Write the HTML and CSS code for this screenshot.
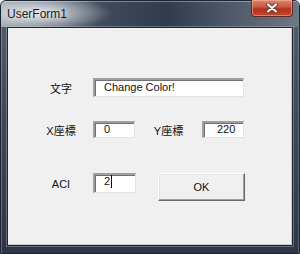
FILE: index.html
```html
<!DOCTYPE html>
<html lang="ja">
<head>
    <meta charset="UTF-8">
    <title>UserForm1</title>
    <link rel="stylesheet" href="styles.css">
</head>
<body>
    <div class="window">
        <div class="titlebar">
            <span class="title">UserForm1</span>
            <div class="close-btn">
                <svg width="14" height="10" viewBox="0 0 14 10">
                    <path d="M3 1.5 L11 8.5 M11 1.5 L3 8.5" stroke="#5a3a36" stroke-width="4" stroke-linecap="round"/>
                    <path d="M3 1.5 L11 8.5 M11 1.5 L3 8.5" stroke="#ffffff" stroke-width="2.2" stroke-linecap="round"/>
                </svg>
            </div>
        </div>
        <div class="client">
            <div class="row row-text">
                <span class="label">文字</span>
                <div class="textbox box-long">Change Color!</div>
            </div>
            <div class="row row-pos">
                <span class="label">X座標</span>
                <div class="textbox box-short">0</div>
                <span class="label-mid">Y座標</span>
                <div class="textbox box-short box-y">220</div>
            </div>
            <div class="row row-aci">
                <span class="label label-aci">ACI</span>
                <div class="textbox box-aci">2<span class="caret"></span></div>
                <div class="button">OK</div>
            </div>
        </div>
    </div>
</body>
</html>
```

FILE: styles.css
```css
* {
    margin: 0;
    padding: 0;
    box-sizing: border-box;
}
body {
    width: 300px;
    height: 254px;
    background-color: #f0f0f0;
    font-family: "Liberation Sans", "Noto Sans CJK JP", sans-serif;
    font-size: 11px;
    color: #000000;
    overflow: hidden;
}
.window {
    width: 300px;
    height: 254px;
    border: 1px solid #1c2430;
    border-radius: 6px 6px 0 0;
    background: linear-gradient(180deg, #56606e 0px, #3e4858 120px, #2c3646 254px);
    box-shadow: inset 1px 0 0 rgba(255, 255, 255, 0.25), inset -1px 0 0 rgba(255, 255, 255, 0.2);
    display: flex;
    flex-direction: column;
}
.titlebar {
    height: 26px;
    display: flex;
    align-items: flex-start;
    padding-left: 6px;
    padding-right: 6px;
    border-radius: 5px 5px 0 0;
    background:
        radial-gradient(ellipse 75px 18px at 36px 12px, rgba(238, 240, 244, 0.9), rgba(238, 240, 244, 0) 100%),
        linear-gradient(90deg, #9aa1ab 0px, #7a8390 40px, #404b5b 100px, #303b4b 165px, #4c5767 225px, #6f7885 300px);
    box-shadow: inset 0 1px 0 rgba(255, 255, 255, 0.35);
}
.title {
    font-size: 12px;
    color: #1a1a1a;
    margin-top: 6px;
    text-shadow: 0 0 6px rgba(255, 255, 255, 0.9);
}
.close-btn {
    margin-left: auto;
    width: 42px;
    height: 17px;
    margin-top: -1px;
    border: 1px solid #5e2a24;
    border-top: none;
    border-radius: 0 0 4px 4px;
    background: linear-gradient(180deg, #d98873 0%, #c9553c 45%, #b2321c 55%, #c4442c 100%);
    box-shadow: inset 0 0 0 1px rgba(255, 190, 170, 0.5);
    display: flex;
    align-items: center;
    justify-content: center;
}
.close-btn svg {
    display: block;
}
.client {
    margin: 0 6px 7px 6px;
    flex-grow: 1;
    background-color: #f0f0f0;
    border: 1px solid #1e2733;
    box-shadow: 0 0 0 1px rgba(200, 206, 214, 0.35), inset -1px -1px 0 #c8ccd0;
    padding-top: 50px;
}
.row {
    display: flex;
    align-items: center;
}
.label {
    width: 56px;
    margin-left: 25px;
    margin-right: 4px;
    text-align: center;
    color: #111111;
}
.textbox {
    background-color: #ffffff;
    border-top: 2px solid #a0a0a0;
    border-left: 2px solid #a0a0a0;
    border-right: 1px solid #e3e3e3;
    border-bottom: 1px solid #e3e3e3;
    box-shadow: inset 1px 1px 0 #6f6f6f;
    padding-left: 9px;
    line-height: 13px;
    padding-top: 0;
    color: #111111;
}
.box-long {
    width: 151px;
    height: 19px;
    padding-top: 1px;
}
.row-pos {
    margin-top: 23px;
}
.row-pos .label {
    margin-top: 2px;
}
.box-short {
    width: 42px;
    height: 17px;
}
.box-y {
    padding-left: 13px;
}
.label-mid {
    width: 67px;
    text-align: center;
    margin-top: 2px;
    color: #111111;
}
.row-aci {
    margin-top: 35px;
    align-items: flex-start;
}
.label-aci {
    margin-top: 5px;
    line-height: 13px;
}
.box-aci {
    width: 43px;
    height: 20px;
    display: flex;
    align-items: flex-start;
}
.caret {
    display: inline-block;
    width: 1px;
    height: 13px;
    background-color: #000000;
    margin-left: 1px;
}
.button {
    width: 87px;
    height: 28px;
    margin-left: 22px;
    background-color: #f0f0f0;
    border-top: 1px solid #ffffff;
    border-left: 1px solid #ffffff;
    border-right: 1px solid #696969;
    border-bottom: 1px solid #696969;
    box-shadow: inset -1px -1px 0 #a0a0a0, inset 1px 1px 0 #e3e3e3;
    display: flex;
    align-items: center;
    justify-content: center;
    font-size: 11px;
    color: #111111;
}
```
